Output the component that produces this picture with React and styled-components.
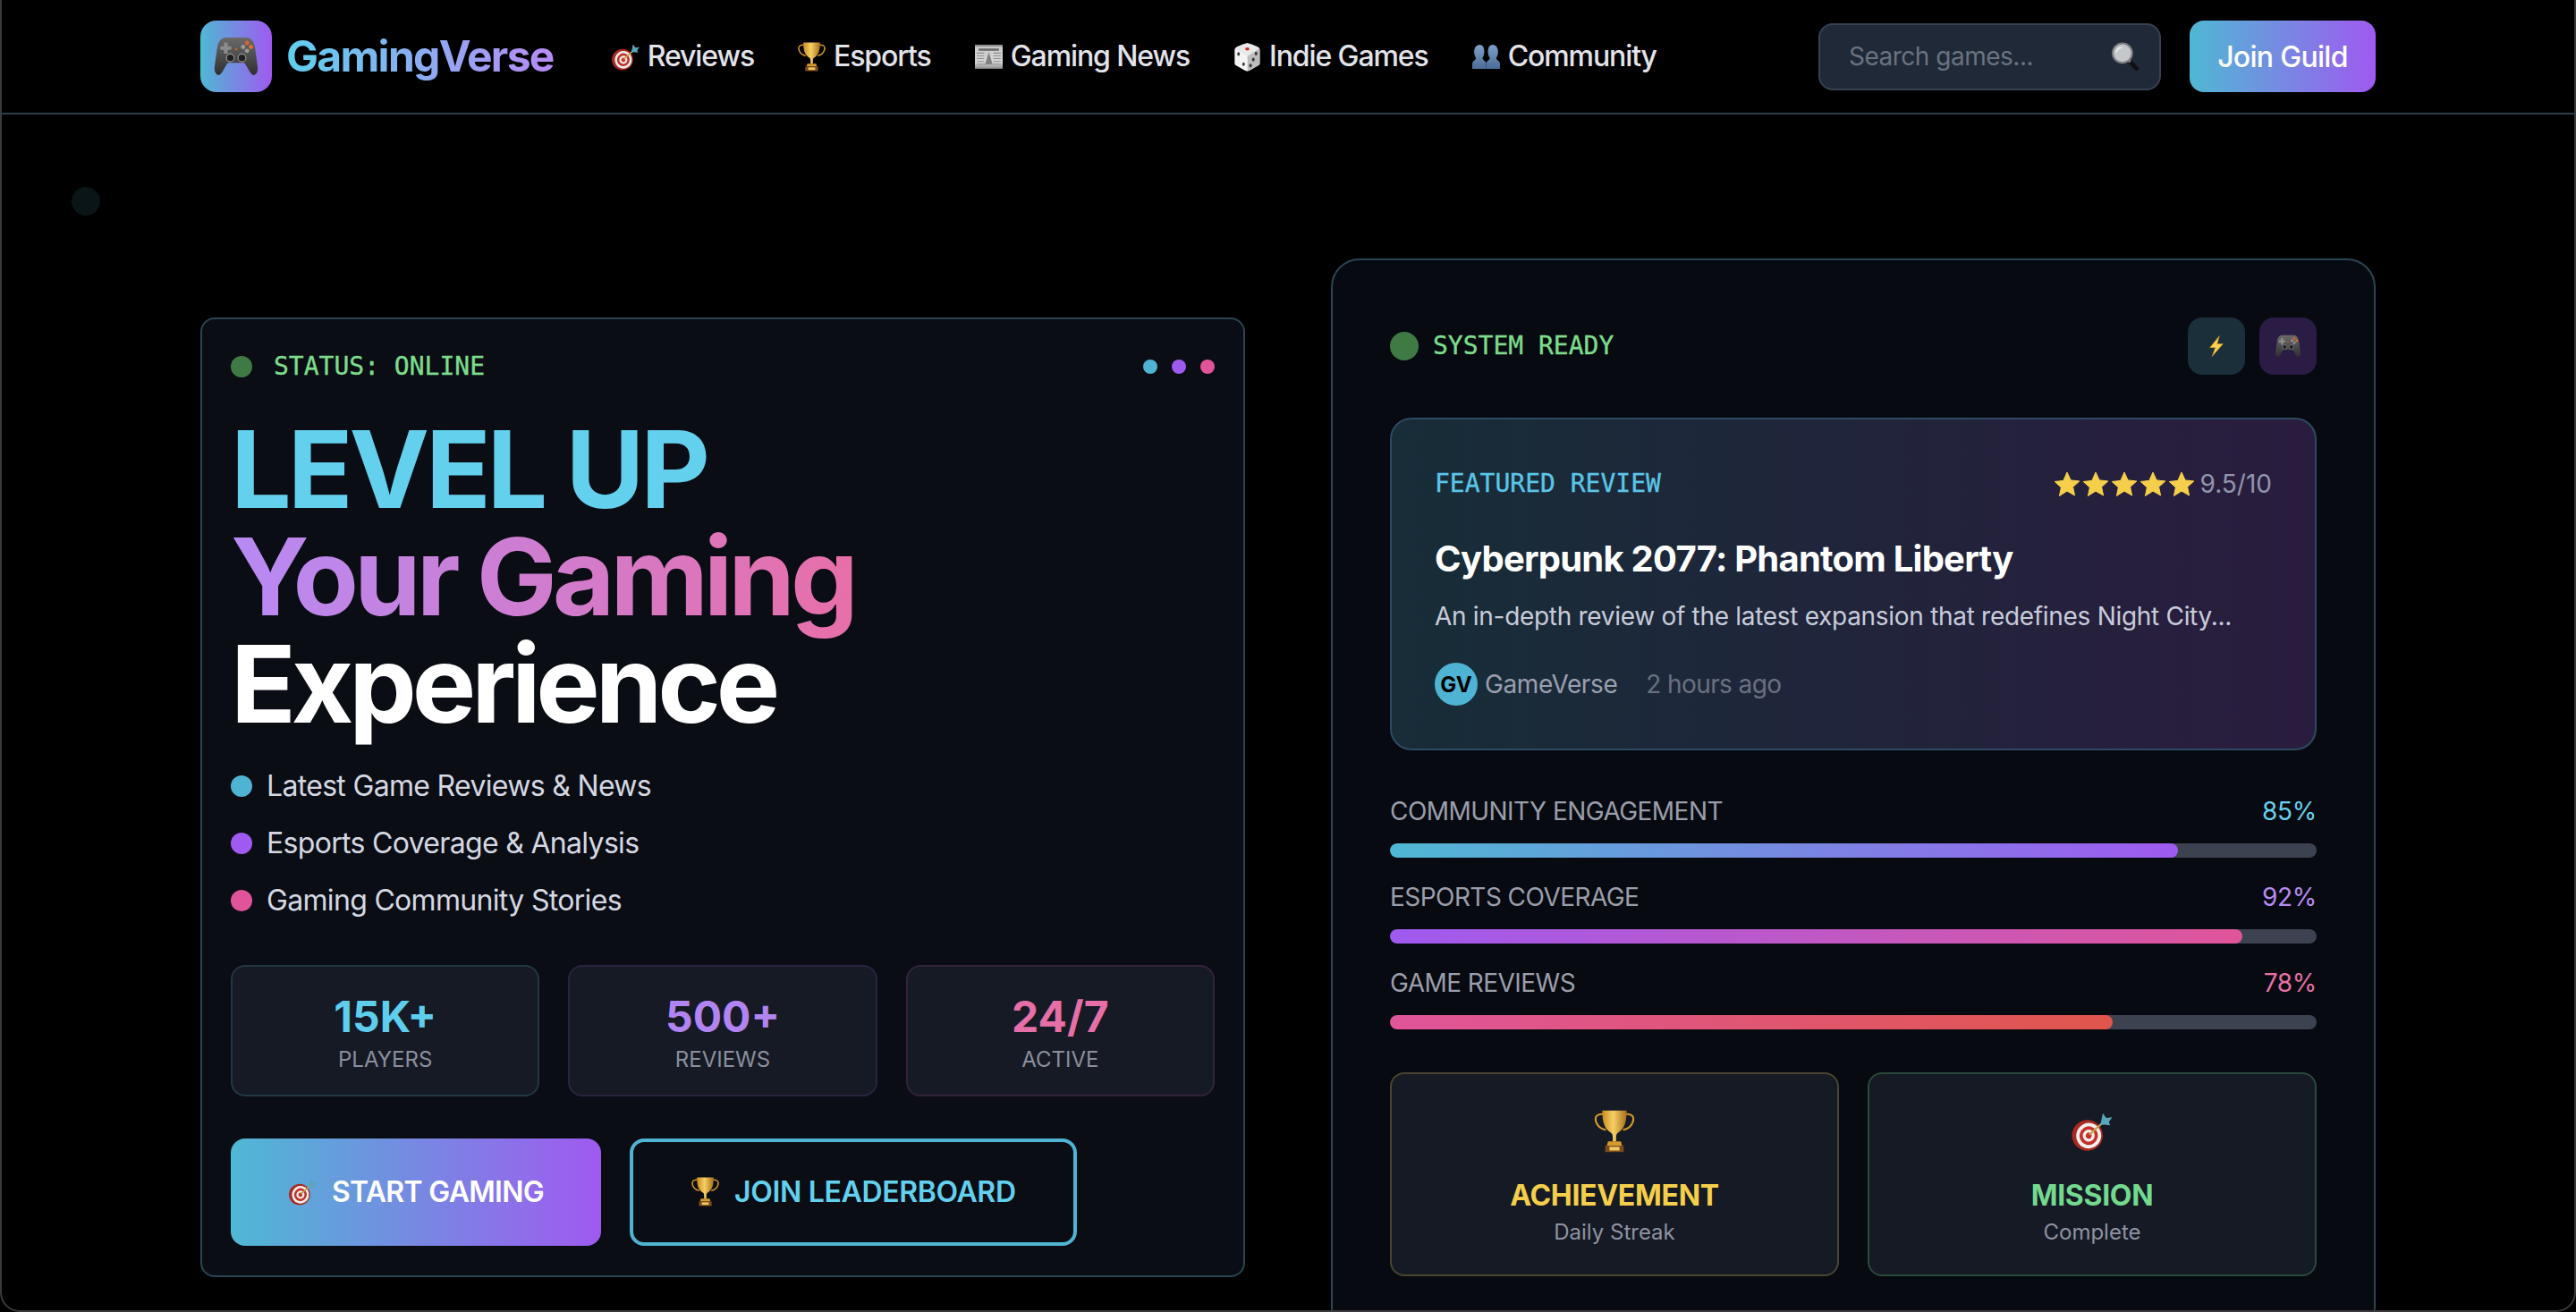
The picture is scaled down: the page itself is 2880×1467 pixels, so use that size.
import styled, { createGlobalStyle } from "styled-components";

const GlobalStyle = createGlobalStyle`
  html, body {
    margin: 0;
    padding: 0;
    height: 100%;
    background: #000;
    overflow: hidden;
  }
  * {
    box-sizing: border-box;
  }
  body {
    font-family: "Inter", "Liberation Sans", sans-serif;
    color: #fff;
  }
`;

const Gamepad = ({ size = 32 }) => (
  <EmojiSvg $size={size} viewBox="0 0 32 32">
    <defs>
      <linearGradient id="padBody" x1="0" y1="0" x2="0" y2="1">
        <stop offset="0" stopColor="#6a6a6a" />
        <stop offset="1" stopColor="#2f2f2f" />
      </linearGradient>
    </defs>
    <path
      d="M9 3h14c3.200 0 5.200 2.500 6 7l1.800 13c.5 3.500-1.300 6.500-3.200 5.800-2.200-.8-4-6.500-6.100-8.300H10.500c-2.100 1.800-3.900 7.500-6.100 8.300-1.900.7-3.700-2.300-3.200-5.800L3 10c.8-4.500 2.800-7 6-7z"
      fill="url(#padBody)"
    />
    <path d="M7.600 6.500h2.600V9h2.500v2.600h-2.500v2.500H7.600v-2.500H5.100V9h2.500z" fill="#8c8c8c" />
    <circle cx="23.500" cy="6.800" r="1.500" fill="#d9662b" />
    <circle cx="26.200" cy="9.500" r="1.500" fill="#e0702e" />
    <circle cx="20.800" cy="9.500" r="1.500" fill="#9a9a9a" />
    <circle cx="23.500" cy="12.200" r="1.500" fill="#9a9a9a" />
    <circle cx="12" cy="17" r="2.700" fill="#1f1f1f" stroke="#8a8a8a" strokeWidth=".8" />
    <circle cx="20" cy="17" r="2.700" fill="#1f1f1f" stroke="#8a8a8a" strokeWidth=".8" />
    <circle cx="16" cy="11" r="1" fill="#b5622a" />
  </EmojiSvg>
);

const Dart = ({ size = 32 }) => (
  <EmojiSvg $size={size} viewBox="0 0 32 32">
    <g transform="rotate(14 12.500 19)">
      <ellipse cx="12.500" cy="19" rx="11.500" ry="11.500" fill="#a92a22" />
      <ellipse cx="13.500" cy="19" rx="9.300" ry="9.500" fill="#f2efec" />
      <ellipse cx="13.500" cy="19" rx="6.800" ry="7" fill="#c4302a" />
      <ellipse cx="13.500" cy="19" rx="4.400" ry="4.500" fill="#f2efec" />
      <ellipse cx="13.500" cy="19" rx="2.200" ry="2.300" fill="#c4302a" />
    </g>
    <path d="M14 18.500 25 8.500" stroke="#c8a04a" strokeWidth="1.500" />
    <path d="M22.500 9.500 24 2.500l2.500 3.500 4.500-.5-2.500 3.500 1 2.500-4.500-.5-3 .5z" fill="#5aa6b8" />
  </EmojiSvg>
);

const Trophy = ({ size = 32 }) => (
  <EmojiSvg $size={size} viewBox="1.500 1 29 30">
    <defs>
      <linearGradient id="cupGold" x1="0" y1="0" x2="1" y2="0">
        <stop offset="0" stopColor="#c98b22" />
        <stop offset=".45" stopColor="#f6cf63" />
        <stop offset="1" stopColor="#a8701a" />
      </linearGradient>
    </defs>
    <path
      d="M8 4C3.500 3.500 2 6 3.200 9.500 4.300 12.800 7.500 14.500 10 15M24 4c4.500-.5 6 2 4.800 5.500-1.100 3.300-4.300 5-6.800 5.500"
      fill="none"
      stroke="#d79b2c"
      strokeWidth="1.300"
    />
    <path d="M7.500 1.500h17c0 7-1 12.500-6 15.500-1 .7-1.300 1.500-1.300 3v3h-2.400v-3c0-1.500-.3-2.300-1.300-3-5-3-6-8.500-6-15.500z" fill="url(#cupGold)" />
    <path d="M11.500 23h9l.8 3h-10.600z" fill="#d79b2c" />
    <path d="M9.500 26h13v4.500h-13z" fill="#7b4a1c" />
    <path d="M12.500 26.800h7v2.600h-7z" fill="#f0c862" />
  </EmojiSvg>
);

const Newspaper = ({ size = 32 }) => (
  <EmojiSvg $size={size} viewBox="0 0 32 32">
    <defs>
      <linearGradient id="paperFade" x1="0" y1="0" x2="0" y2="1">
        <stop offset="0" stopColor="#c9c9c9" />
        <stop offset=".75" stopColor="#d8d8d8" />
        <stop offset="1" stopColor="#8a8a8a" />
      </linearGradient>
    </defs>
    <rect x="1" y="3" width="30" height="26" fill="url(#paperFade)" />
    <rect x="1" y="3" width="30" height="2" fill="#8f8f8f" />
    <rect x="5" y="7" width="22" height="2.500" fill="#6a6a6a" />
    <path d="M3 12h8M3 15h8M3 18h8M3 21h8M21 12h8M21 15h8M21 18h8M21 21h8M3 24h26" stroke="#8e8e8e" strokeWidth="1" />
    <path d="M16 11l4 13h-8z" fill="#808080" />
  </EmojiSvg>
);

const Dice = ({ size = 32 }) => (
  <EmojiSvg $size={size} viewBox="0 0 32 32">
    <path d="M16 1c1 0 11 3.800 12.500 5 .8.600 1 1.500 1 2.500V23c0 1-.5 1.800-1.400 2.300L18 31c-1.200.600-2.800.600-4 0L3.900 25.300C3 24.800 2.500 24 2.500 23V8.500c0-1 .2-1.900 1-2.500C5 4.800 15 1 16 1z" fill="#e9e9e9" />
    <path d="M16 15.500 29 7c.3.400.5 1 .5 1.500V23c0 1-.5 1.800-1.400 2.300L18 31c-.7.300-1.300.500-2 .5z" fill="#bdbdbd" />
    <path d="M16 15.500 3 7c-.3.400-.5 1-.5 1.500V23c0 1 .5 1.800 1.400 2.300L14 31c.7.300 1.300.500 2 .5z" fill="#f4f4f4" />
    <ellipse cx="16" cy="7.500" rx="2.300" ry="1.600" fill="#c9302a" />
    <ellipse cx="6.500" cy="13" rx="1.400" ry="2" fill="#3a3a3a" />
    <ellipse cx="12" cy="24" rx="1.400" ry="2" fill="#3a3a3a" />
    <ellipse cx="25.500" cy="12.500" rx="1.500" ry="2.100" fill="#3a3a3a" />
    <ellipse cx="22.500" cy="19" rx="1.500" ry="2.100" fill="#3a3a3a" />
    <ellipse cx="19.500" cy="25.500" rx="1.500" ry="2.100" fill="#3a3a3a" />
  </EmojiSvg>
);

const Busts = ({ size = 32 }) => (
  <EmojiSvg $size={size} viewBox="0 0 32 32">
    <defs>
      <linearGradient id="bustFill" x1="0" y1="0" x2="0" y2="1">
        <stop offset="0" stopColor="#7fa0c8" />
        <stop offset="1" stopColor="#4a6c96" />
      </linearGradient>
    </defs>
    <path d="M9 3c3.500 0 5 3.500 5 7.500 0 3-1 5.500-2 7 .2 2 3.500 3 4 5.500V29H1v-6c.5-2.500 3.800-3.500 4-5.500-1-1.500-2-4-2-7C3 6.500 5.500 3 9 3z" fill="url(#bustFill)" />
    <path d="M23 3c3.500 0 6 3.500 6 7.500 0 3-1 5.500-2 7 .2 2 3.500 3 4 5.500v6H16v-6c.5-2.500 3.800-3.500 4-5.500-1-1.500-2-4-2-7C18 6.500 19.500 3 23 3z" fill="url(#bustFill)" />
  </EmojiSvg>
);

const Bolt = ({ size = 32 }) => (
  <EmojiSvg $size={size} viewBox="0 0 32 32">
    <path d="M20 2 7 18h7.500L10 30l15-17h-8z" fill="#f8d253" stroke="#d98f1f" strokeWidth=".8" strokeLinejoin="round" />
  </EmojiSvg>
);

const Magnifier = ({ size = 32 }) => (
  <EmojiSvg $size={size} viewBox="0 0 32 32">
    <path d="M20 20.500 28 29" stroke="#111" strokeWidth="4.500" strokeLinecap="round" />
    <path d="M18.500 19 21 21.500" stroke="#8c8c8c" strokeWidth="3" />
    <circle cx="12.500" cy="12" r="10.500" fill="#c5c8cb" stroke="#7e8082" strokeWidth="2" />
    <path d="M6 11c.5-3 3-5 6-5" stroke="#eef0f1" strokeWidth="1.500" fill="none" />
  </EmojiSvg>
);

const Star = () => (
  <StarSvg viewBox="0 0 30 28">
    <path
      d="M15 1l4.100 8.900 9.700 1.100-7.200 6.500 2 9.500-8.600-4.900L6.400 27.500l2-9.500L1.200 11.500l9.700-1.100z"
      fill="#f5cf4a"
      stroke="#f5cf4a"
      strokeWidth="1"
      strokeLinejoin="round"
    />
  </StarSvg>
);

const navItems = [
  { label: "Reviews", Icon: Dart },
  { label: "Esports", Icon: Trophy },
  { label: "Gaming News", Icon: Newspaper },
  { label: "Indie Games", Icon: Dice },
  { label: "Community", Icon: Busts },
];

const stats = [
  { value: "15K+", label: "PLAYERS", color: "#5fcdec", border: "#223743" },
  { value: "500+", label: "REVIEWS", color: "#b184f2", border: "#2a2440" },
  { value: "24/7", label: "ACTIVE", color: "#e56fa6", border: "#33233a" },
];

const features = [
  { text: "Latest Game Reviews & News", color: "#4fb3d4" },
  { text: "Esports Coverage & Analysis", color: "#9f5af0" },
  { text: "Gaming Community Stories", color: "#e0559a" },
];

const bars = [
  { label: "COMMUNITY ENGAGEMENT", value: 85, color: "#6ad0ee", from: "#4fb8d4", to: "#9f5af0" },
  { label: "ESPORTS COVERAGE", value: 92, color: "#b88cf2", from: "#9f5af0", to: "#e0559a" },
  { label: "GAME REVIEWS", value: 78, color: "#e56fa6", from: "#e0559a", to: "#e0564c" },
];

export default function App() {
  return (
    <Page>
      <GlobalStyle />
      <Header>
        <HeaderInner>
          <Brand>
            <LogoTile>
              <Gamepad size={52} />
            </LogoTile>
            <BrandName>GamingVerse</BrandName>
          </Brand>
          <Nav>
            {navItems.map(({ label, Icon }) => (
              <NavLink key={label}>
                <Icon size={33} />
                {label}
              </NavLink>
            ))}
          </Nav>
          <HeaderActions>
            <SearchBox>
              <SearchInput placeholder="Search games..." readOnly />
              <SearchIcon>
                <Magnifier size={33} />
              </SearchIcon>
            </SearchBox>
            <JoinButton>Join Guild</JoinButton>
          </HeaderActions>
        </HeaderInner>
      </Header>

      <FloatingDot />

      <Main>
        <HeroCard>
          <CardTop>
            <StatusRow>
              <StatusDot $size={24} />
              <MonoText>STATUS: ONLINE</MonoText>
            </StatusRow>
            <Dots>
              <Dot $color="#4fb3d4" />
              <Dot $color="#9f5af0" />
              <Dot $color="#e0559a" />
            </Dots>
          </CardTop>

          <Title>
            <TitleLine $color="#63d0ee" $tracking={-4.15}>LEVEL UP</TitleLine>
            <GradientLine>Your Gaming</GradientLine>
            <TitleLine $color="#ffffff" $tracking={-5.1}>Experience</TitleLine>
          </Title>

          <FeatureList>
            {features.map((f) => (
              <FeatureItem key={f.text}>
                <Dot $color={f.color} $size={24} />
                {f.text}
              </FeatureItem>
            ))}
          </FeatureList>

          <StatGrid>
            {stats.map((s) => (
              <StatCard key={s.label} $border={s.border}>
                <StatValue $color={s.color}>{s.value}</StatValue>
                <StatLabel>{s.label}</StatLabel>
              </StatCard>
            ))}
          </StatGrid>

          <ButtonRow>
            <PrimaryButton>
              <Dart size={33} />
              START GAMING
            </PrimaryButton>
            <OutlineButton>
              <Trophy size={33} />
              JOIN LEADERBOARD
            </OutlineButton>
          </ButtonRow>
        </HeroCard>

        <DashCard>
          <DashTop>
            <DashStatus>
              <StatusDot $size={32} />
              <MonoText>SYSTEM READY</MonoText>
            </DashStatus>
            <IconRow>
              <IconTile $bg="#1a2f3a">
                <Bolt size={26} />
              </IconTile>
              <IconTile $bg="#2a1c44">
                <Gamepad size={30} />
              </IconTile>
            </IconRow>
          </DashTop>

          <Featured>
            <FeaturedTop>
              <MonoText $color="#5cc5e6">FEATURED REVIEW</MonoText>
              <Rating>
                <Stars>
                  {[0, 1, 2, 3, 4].map((i) => (
                    <Star key={i} />
                  ))}
                </Stars>
                <Score>9.5/10</Score>
              </Rating>
            </FeaturedTop>
            <ReviewTitle>Cyberpunk 2077: Phantom Liberty</ReviewTitle>
            <ReviewText>An in-depth review of the latest expansion that redefines Night City...</ReviewText>
            <ReviewMeta>
              <Author>
                <Avatar>GV</Avatar>
                <AuthorName>GameVerse</AuthorName>
              </Author>
              <TimeAgo>2 hours ago</TimeAgo>
            </ReviewMeta>
          </Featured>

          <BarList>
            {bars.map((b) => (
              <div key={b.label}>
                <BarHead>
                  <BarLabel>{b.label}</BarLabel>
                  <BarValue $color={b.color}>{b.value}%</BarValue>
                </BarHead>
                <BarTrack>
                  <BarFill $from={b.from} $to={b.to} style={{ width: `${b.value}%` }} />
                </BarTrack>
              </div>
            ))}
          </BarList>

          <BadgeGrid>
            <Badge $border="#4a4530">
              <BadgeIcon>
                <Trophy size={48} />
              </BadgeIcon>
              <BadgeTitle $color="#f5cf4a">ACHIEVEMENT</BadgeTitle>
              <BadgeSub>Daily Streak</BadgeSub>
            </Badge>
            <Badge $border="#2a4a3c">
              <BadgeIcon>
                <Dart size={48} />
              </BadgeIcon>
              <BadgeTitle $color="#72d98e">MISSION</BadgeTitle>
              <BadgeSub>Complete</BadgeSub>
            </Badge>
          </BadgeGrid>
        </DashCard>
      </Main>

      <WindowFrame />
    </Page>
  );
}

const EmojiSvg = styled.svg`
  width: ${(p) => p.$size}px;
  height: ${(p) => p.$size}px;
  flex: none;
  display: block;
`;

const StarSvg = styled.svg`
  width: 30px;
  height: 28px;
  flex: none;
  display: block;
`;

const Page = styled.div`
  position: relative;
  width: 2880px;
  height: 1467px;
  overflow: hidden;
  background: #000;
`;

const WindowFrame = styled.div`
  position: absolute;
  inset: 0;
  pointer-events: none;
  border: 2px solid #3a3a3c;
  border-top: none;
  border-radius: 0 0 22px 22px;
`;

const Header = styled.header`
  padding: 23px 224px;
  border-bottom: 2px solid #2c3f48;
`;

const HeaderInner = styled.div`
  display: flex;
  align-items: center;
`;

const Brand = styled.div`
  display: flex;
  align-items: center;
  gap: 16px;
`;

const LogoTile = styled.div`
  width: 80px;
  height: 80px;
  border-radius: 18px;
  display: flex;
  align-items: center;
  justify-content: center;
  background: linear-gradient(90deg, #4fb8d4, #9f5af0);
`;

const BrandName = styled.span`
  font-size: 48px;
  font-weight: 700;
  line-height: 72px;
  letter-spacing: -1.7px;
  background: linear-gradient(90deg, #5fd0ee, #b88af5);
  -webkit-background-clip: text;
  background-clip: text;
  color: transparent;
`;

const Nav = styled.nav`
  display: flex;
  align-items: center;
  gap: 48px;
  margin-left: 64px;
`;

const NavLink = styled.a`
  display: flex;
  align-items: center;
  gap: 8px;
  font-size: 32px;
  font-weight: 500;
  line-height: 48px;
  letter-spacing: -1.1px;
  color: #e2e4ea;
`;

const HeaderActions = styled.div`
  display: flex;
  align-items: center;
  gap: 32px;
  margin-left: auto;
`;

const SearchBox = styled.div`
  position: relative;
  width: 383px;
  height: 75px;
`;

const SearchInput = styled.input`
  width: 100%;
  height: 100%;
  padding: 0 80px 0 32px;
  border: 2px solid #374151;
  border-radius: 16px;
  outline: none;
  background: #1f2937;
  color: #fff;
  font-family: "Inter", sans-serif;
  font-size: 28px;
  letter-spacing: -0.5px;

  &::placeholder {
    color: #6b7280;
    opacity: 1;
  }
`;

const SearchIcon = styled.span`
  position: absolute;
  right: 23px;
  top: 21px;
`;

const JoinButton = styled.button`
  width: 208px;
  height: 80px;
  border: none;
  border-radius: 16px;
  background: linear-gradient(90deg, #4fb8d4, #9f5af0);
  color: #fff;
  font-family: "Inter", sans-serif;
  font-size: 32px;
  font-weight: 500;
  letter-spacing: -0.7px;
`;

const FloatingDot = styled.div`
  position: absolute;
  left: 80px;
  top: 209px;
  width: 32px;
  height: 32px;
  border-radius: 50%;
  background: #0a1518;
`;

const Main = styled.main`
  display: grid;
  grid-template-columns: 1fr 1fr;
  gap: 96px;
  align-items: center;
  padding: 161px 224px 0;
`;

const HeroCard = styled.section`
  padding: 32px 32px 33px;
  border: 2px solid #2a4552;
  border-radius: 16px;
  background: #0a0d14;
`;

const CardTop = styled.div`
  display: flex;
  align-items: center;
  justify-content: space-between;
  height: 42px;
`;

const StatusRow = styled.div`
  display: flex;
  align-items: center;
  gap: 24px;
`;

const DashStatus = styled(StatusRow)`
  gap: 16px;
`;

const StatusDot = styled.span`
  width: ${(p) => p.$size}px;
  height: ${(p) => p.$size}px;
  border-radius: 50%;
  background: #3f7a45;
`;

const MonoText = styled.span`
  font-family: "DejaVu Sans Mono", "Liberation Mono", monospace;
  font-size: 28px;
  line-height: 42px;
  -webkit-text-stroke: 0.35px currentColor;
  color: ${(p) => p.$color || "#7ddc8c"};
`;

const Dots = styled.div`
  display: flex;
  gap: 16px;
`;

const Dot = styled.span`
  width: ${(p) => p.$size || 16}px;
  height: ${(p) => p.$size || 16}px;
  flex: none;
  border-radius: 50%;
  background: ${(p) => p.$color};
`;

const Title = styled.h1`
  margin: 34px 0 0;
  font-size: 120px;
  font-weight: 750;
  line-height: 120px;
`;

const TitleLine = styled.span`
  display: block;
  letter-spacing: ${(p) => p.$tracking}px;
  color: ${(p) => p.$color};
`;

const GradientLine = styled.span`
  display: block;
  width: fit-content;
  padding-bottom: 30px;
  margin-bottom: -30px;
  letter-spacing: -5.07px;
  background: linear-gradient(90deg, #b78af5, #e86fa8);
  -webkit-background-clip: text;
  background-clip: text;
  color: transparent;
`;

const FeatureList = styled.ul`
  display: flex;
  flex-direction: column;
  gap: 16px;
  margin: 30px 0 0;
  padding: 0;
  list-style: none;
`;

const FeatureItem = styled.li`
  display: flex;
  align-items: center;
  gap: 16px;
  font-size: 32px;
  line-height: 48px;
  letter-spacing: -0.68px;
  color: #d5d8e2;
`;

const StatGrid = styled.div`
  display: grid;
  grid-template-columns: repeat(3, 1fr);
  gap: 32px;
  margin-top: 48px;
`;

const StatCard = styled.div`
  padding: 24px;
  border: 2px solid ${(p) => p.$border};
  border-radius: 16px;
  background: #151a24;
  text-align: center;
`;

const StatValue = styled.div`
  font-size: 48px;
  font-weight: 700;
  line-height: 64px;
  color: ${(p) => p.$color};
`;

const StatLabel = styled.div`
  font-size: 24px;
  line-height: 31px;
  color: #8b8f9c;
`;

const ButtonRow = styled.div`
  display: flex;
  gap: 32px;
  margin-top: 47px;
`;

const PrimaryButton = styled.button`
  display: flex;
  align-items: center;
  gap: 16px;
  height: 120px;
  padding: 0 64px;
  border: none;
  border-radius: 16px;
  background: linear-gradient(90deg, #4fb8d4, #9f5af0);
  color: #fff;
  font-family: "Inter", sans-serif;
  font-size: 32px;
  font-weight: 600;
  letter-spacing: -0.7px;
`;

const OutlineButton = styled(PrimaryButton)`
  border: 4px solid #4fb3d4;
  background: transparent;
  color: #63d0ee;
  letter-spacing: -0.35px;
`;

const DashCard = styled.section`
  padding: 64px;
  border: 2px solid #2a4552;
  border-radius: 32px;
  background: #070a10;
`;

const DashTop = styled.div`
  display: flex;
  align-items: center;
  justify-content: space-between;
`;

const IconRow = styled.div`
  display: flex;
  gap: 16px;
`;

const IconTile = styled.div`
  width: 64px;
  height: 64px;
  display: flex;
  align-items: center;
  justify-content: center;
  border-radius: 16px;
  background: ${(p) => p.$bg};
`;

const Featured = styled.article`
  margin-top: 48px;
  padding: 48px;
  border: 2px solid #2d4a62;
  border-radius: 24px;
  background: linear-gradient(90deg, #172d38, #2a1c3e);
`;

const FeaturedTop = styled.div`
  display: flex;
  align-items: center;
  justify-content: space-between;
  height: 48px;
`;

const Rating = styled.div`
  display: flex;
  align-items: center;
  gap: 6px;
`;

const Stars = styled.div`
  display: flex;
  gap: 2px;
`;

const Score = styled.span`
  font-size: 28px;
  line-height: 42px;
  color: #9296ab;
`;

const ReviewTitle = styled.h3`
  margin: 32px 0 0;
  font-size: 40px;
  font-weight: 700;
  line-height: 56px;
  letter-spacing: -0.77px;
  color: #fff;
`;

const ReviewText = styled.p`
  margin: 15px 0 0;
  font-size: 28px;
  line-height: 42px;
  letter-spacing: -0.3px;
  color: #c8ccda;
`;

const ReviewMeta = styled.div`
  display: flex;
  align-items: center;
  gap: 32px;
  margin-top: 31px;
`;

const Author = styled.div`
  display: flex;
  align-items: center;
  gap: 8px;
`;

const Avatar = styled.span`
  width: 48px;
  height: 48px;
  display: flex;
  align-items: center;
  justify-content: center;
  border-radius: 50%;
  background: #4fb3d4;
  color: #000;
  font-size: 24px;
  font-weight: 700;
`;

const AuthorName = styled.span`
  font-size: 28px;
  letter-spacing: -0.4px;
  color: #9a9fae;
`;

const TimeAgo = styled.span`
  font-size: 28px;
  letter-spacing: -0.6px;
  color: #6b7080;
`;

const BarList = styled.div`
  display: flex;
  flex-direction: column;
  gap: 24px;
  margin-top: 48px;
`;

const BarHead = styled.div`
  display: flex;
  justify-content: space-between;
  margin-bottom: 16px;
  font-size: 28px;
  line-height: 40px;
`;

const BarLabel = styled.span`
  letter-spacing: -0.55px;
  color: #9a9eab;
`;

const BarValue = styled.span`
  letter-spacing: -0.3px;
  color: ${(p) => p.$color};
`;

const BarTrack = styled.div`
  height: 16px;
  border-radius: 8px;
  background: #3d4250;
  overflow: hidden;
`;

const BarFill = styled.div`
  height: 100%;
  border-radius: 8px;
  background: linear-gradient(90deg, ${(p) => p.$from}, ${(p) => p.$to});
`;

const BadgeGrid = styled.div`
  display: grid;
  grid-template-columns: 1fr 1fr;
  gap: 32px;
  margin-top: 48px;
`;

const Badge = styled.div`
  padding: 32px 32px 30px;
  border: 2px solid ${(p) => p.$border};
  border-radius: 16px;
  background: #151a24;
  text-align: center;
`;

const BadgeIcon = styled.div`
  height: 64px;
  display: flex;
  align-items: center;
  justify-content: center;
  margin-bottom: 16px;
`;

const BadgeTitle = styled.div`
  font-size: 32px;
  font-weight: 700;
  line-height: 48px;
  letter-spacing: -0.3px;
  color: ${(p) => p.$color};
`;

const BadgeSub = styled.div`
  font-size: 24px;
  line-height: 34px;
  color: #8f93a2;
`;
